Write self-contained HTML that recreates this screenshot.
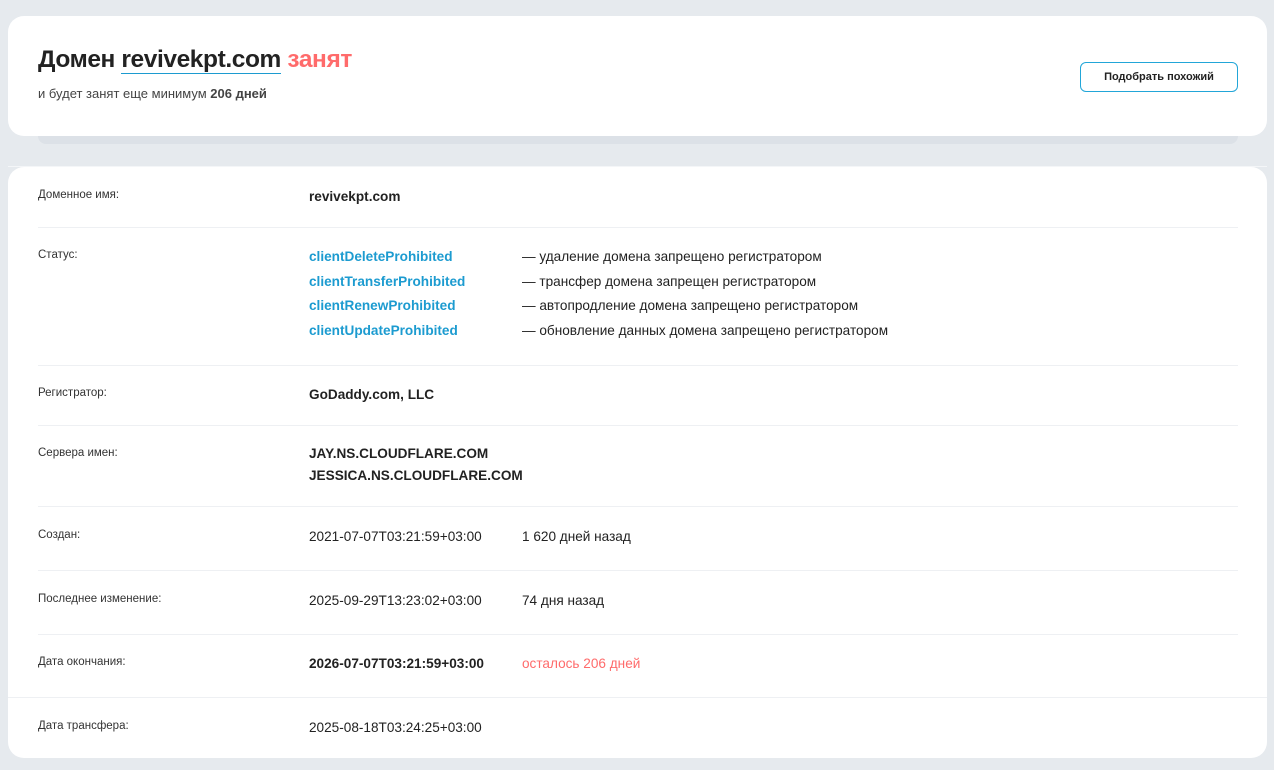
<!DOCTYPE html><html><head><meta charset="utf-8"><style>
body{margin:0;width:1274px;height:770px;background:#e6eaee;font-family:"Liberation Sans",sans-serif;color:#222;position:relative;overflow:hidden}
.c1{position:absolute;left:8px;top:16px;width:1259px;height:120px;background:#fff;border-radius:16px}
.sh{position:absolute;left:38px;top:130px;width:1200px;height:14px;background:#dce1e7;border-radius:0 0 8px 8px}
h1{position:absolute;margin:0;font-size:24.5px;font-weight:bold;color:#222;letter-spacing:-0.4px;white-space:nowrap}
h1 u{text-decoration:none;border-bottom:1.5px solid #1c9bd0}
h1 span{color:#ff6b6b}
.sub{position:absolute;left:30px;top:86px;font-size:13px;color:#444}
.btn{position:absolute;left:1080px;top:62px;width:158px;height:30px;border:1px solid #22a6d8;border-radius:6px;font-size:11px;font-weight:bold;text-align:center;line-height:28px;box-sizing:border-box}
.line{position:absolute;left:8px;top:166px;width:1259px;height:1px;background:#f4f6f8}
.c2{position:absolute;left:8px;top:167px;width:1259px;height:591px;background:#fff;border-radius:16px}
.r{position:absolute;left:30px;font-size:13.6px}
.l{position:absolute;left:0;font-size:11.5px;color:#333;white-space:nowrap}
.v{position:absolute;left:271px;white-space:nowrap;line-height:24.7px}
.d{position:absolute;left:484px;white-space:nowrap;line-height:24.7px}
.b{font-weight:bold}
.blue{color:#1c9bd0;font-weight:bold}
.sep{position:absolute;left:30px;width:1200px;height:1px;background:#eef0f3}
</style></head><body>
<div class="sh"></div>
<div class="c1"></div>
<h1 style="left:38px;top:46px">Домен <u>revivekpt.com</u> <span>занят</span></h1>
<div class="sub" style="left:38px">и будет занят еще минимум <b>206 дней</b></div>
<div class="btn">Подобрать похожий</div>
<div class="line"></div>
<div class="c2">
<div class="r" style="top:22px"><div class="l" style="top:0">Доменное имя:</div><div class="v b" style="top:-4px">revivekpt.com</div></div>
<div class="sep" style="top:60px"></div>
<div class="r" style="top:82px"><div class="l">Статус:</div>
<div class="v blue" style="top:-4px">clientDeleteProhibited<br>clientTransferProhibited<br>clientRenewProhibited<br>clientUpdateProhibited</div>
<div class="d" style="top:-4px">— удаление домена запрещено регистратором<br>— трансфер домена запрещен регистратором<br>— автопродление домена запрещено регистратором<br>— обновление данных домена запрещено регистратором</div></div>
<div class="sep" style="top:198px"></div>
<div class="r" style="top:220px"><div class="l">Регистратор:</div><div class="v b" style="top:-4px">GoDaddy.com, LLC</div></div>
<div class="sep" style="top:258px"></div>
<div class="r" style="top:280px"><div class="l">Сервера имен:</div><div class="v b" style="top:-4px;line-height:22px">JAY.NS.CLOUDFLARE.COM<br>JESSICA.NS.CLOUDFLARE.COM</div></div>
<div class="sep" style="top:339px"></div>
<div class="r" style="top:362px"><div class="l">Создан:</div><div class="v" style="top:-4px">2021-07-07T03:21:59+03:00</div><div class="d" style="top:-4px">1 620 дней назад</div></div>
<div class="sep" style="top:403px"></div>
<div class="r" style="top:426px"><div class="l">Последнее изменение:</div><div class="v" style="top:-4px">2025-09-29T13:23:02+03:00</div><div class="d" style="top:-4px">74 дня назад</div></div>
<div class="sep" style="top:467px"></div>
<div class="r" style="top:489px"><div class="l">Дата окончания:</div><div class="v b" style="top:-4px">2026-07-07T03:21:59+03:00</div><div class="d" style="top:-4px;color:#ff6b6b">осталось 206 дней</div></div>
<div class="sep" style="top:530px;left:0;width:1259px"></div>
<div class="r" style="top:553px"><div class="l">Дата трансфера:</div><div class="v" style="top:-4px">2025-08-18T03:24:25+03:00</div></div>
</div>
</body></html>
